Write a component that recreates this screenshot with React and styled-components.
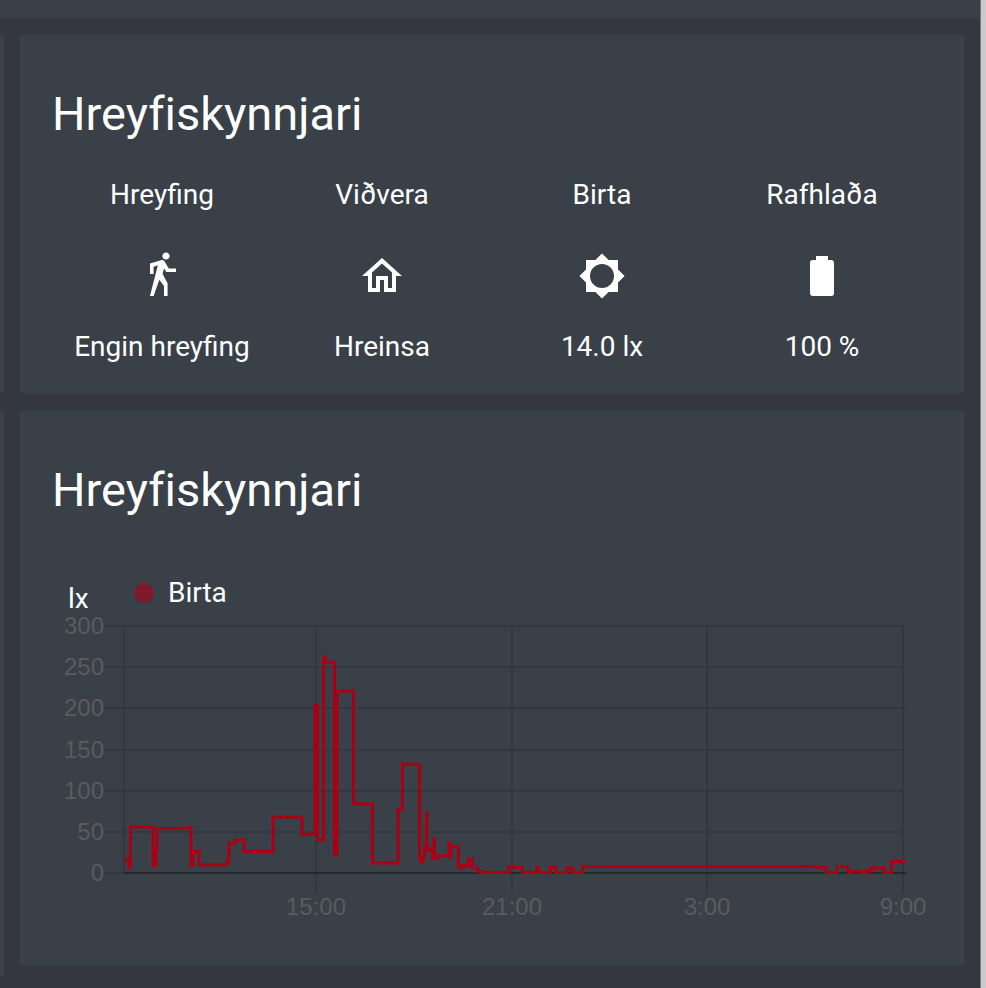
import React from 'react';
import styled, { createGlobalStyle } from 'styled-components';

const icons = {
	walk: 'M14.12,10H19V8.2H15.38L13.38,4.87C13.08,4.37 12.54,4.03 11.92,4.03C11.74,4.03 11.58,4.06 11.42,4.11L6,5.8V11H7.8V7.33L9.91,6.67L6,22H7.8L10.67,13.89L13,17V22H14.8V15.59L12.31,11.05L13.04,8.18M14,3.8C15,3.8 15.8,3 15.8,2C15.8,1 15,0.2 14,0.2C13,0.2 12.2,1 12.2,2C12.2,3 13,3.8 14,3.8Z',
	home: 'M12 5.69L17 10.19V18H15V12H9V18H7V10.19L12 5.69M12 3L2 12H5V20H11V14H13V20H19V12H22',
	brightness: 'M12,18A6,6 0 0,1 6,12A6,6 0 0,1 12,6A6,6 0 0,1 18,12A6,6 0 0,1 12,18M20,15.31L23.31,12L20,8.69V4H15.31L12,0.69L8.69,4H4V8.69L0.69,12L4,15.31V20H8.69L12,23.31L15.31,20H20V15.31Z',
	battery: 'M16.67,4H15V2H9V4H7.33A1.33,1.33 0 0,0 6,5.33V20.67C6,21.4 6.6,22 7.33,22H16.67A1.33,1.33 0 0,0 18,20.67V5.33C18,4.6 17.4,4 16.67,4Z'
};

const entities = [
	{ name: 'Hreyfing', icon: 'walk', state: 'Engin hreyfing' },
	{ name: 'Viðvera', icon: 'home', state: 'Hreinsa' },
	{ name: 'Birta', icon: 'brightness', state: '14.0 lx' },
	{ name: 'Rafhlaða', icon: 'battery', state: '100 %' }
];

// [offset from the left of the plot, lx]
const readings = [
	[0, 16], [5, 7], [6.5, 56], [29, 9], [32, 30], [33, 54], [59, 55],
	[67, 9], [69, 26], [75, 10], [103, 14], [105, 36], [111, 40],
	[120, 26], [149, 68], [178, 47], [191, 203], [193.5, 40], [199.5, 262],
	[201, 256], [210.5, 22], [213, 221], [229.5, 84], [248.5, 12],
	[274, 77], [278.5, 133], [280, 132], [295.5, 17], [297.5, 13],
	[299, 19], [300.5, 32], [302.5, 73], [303, 28], [305, 30],
	[308.5, 18], [310, 42], [310.5, 18], [314, 21], [325, 36],
	[326.5, 19], [327, 32], [334.5, 7], [338.5, 9], [344.5, 17],
	[348.5, 6], [353.5, 2], [357, 0.5], [384.5, 7], [398.5, 0.5],
	[413, 7], [414.5, 0.5], [426.5, 7], [431.5, 0.5], [443.5, 6],
	[448.5, 0.5], [458.5, 8], [692.5, 7], [702, 0.5], [713, 8],
	[724, 0.5], [728, 2], [736, 0.5], [739, 2], [742, 0.5], [745.5, 4],
	[748.5, 6.5], [760, 0.5], [767.5, 14], [782, 14]
];

const levels = [300, 250, 200, 150, 100, 50, 0];

const hours = [
	{ x: 264, label: '15:00' },
	{ x: 460, label: '21:00' },
	{ x: 655, label: '3:00' },
	{ x: 851, label: '9:00' }
];

const plot = { left: 72, right: 854, top: 14, bottom: 261 };

const toY = (lx) => plot.bottom - (lx / 300) * (plot.bottom - plot.top);

const stepPath = readings
	.map(([x, lx], i) => (i === 0 ? `M${plot.left + x} ${toY(lx)}` : `H${plot.left + x}V${toY(lx)}`))
	.join('');

const Icon = ({ name }) => (
	<IconSvg viewBox="0 0 24 24" aria-hidden="true">
		<path d={icons[name]} />
	</IconSvg>
);

const GlanceCard = () => (
	<Card>
		<Title>Hreyfiskynnjari</Title>
		<Glance>
			{entities.map((entity) => (
				<Entity key={entity.name} type="button">
					<span>{entity.name}</span>
					<Icon name={entity.icon} />
					<span>{entity.state}</span>
				</Entity>
			))}
		</Glance>
	</Card>
);

const HistoryChart = () => (
	<ChartSvg viewBox="0 0 880 322" role="img" aria-label="Birta (lx)">
		{levels.map((lx) => {
			const y = Math.round(toY(lx));
			return (
				<g key={lx}>
					<GridLine x1="52" x2={plot.right} y1={y} y2={y} />
					<AxisText x="52" y={y + 8} textAnchor="end">{lx}</AxisText>
				</g>
			);
		})}
		<GridLine x1={plot.left} x2={plot.left} y1={plot.top} y2={plot.bottom} />
		{hours.map((hour) => (
			<g key={hour.label}>
				<GridLine x1={hour.x} x2={hour.x} y1={plot.top} y2="281" />
				<AxisText x={hour.x} y="303" textAnchor="middle">{hour.label}</AxisText>
			</g>
		))}
		<GridLine $zero x1={plot.left} x2={plot.right} y1={plot.bottom} y2={plot.bottom} />
		<Series d={stepPath} />
	</ChartSvg>
);

const HistoryCard = () => (
	<Card>
		<Title>Hreyfiskynnjari</Title>
		<ChartHead>
			<Unit>lx</Unit>
			<Legend>
				<Dot />
				Birta
			</Legend>
		</ChartHead>
		<HistoryChart />
	</Card>
);

const App = () => (
	<Page>
		<GlobalStyle />
		<Dashboard>
			<Toolbar />
			<View>
				<SideColumn>
					<SideCard $height={360} />
					<SideCard $height={568} />
				</SideColumn>
				<Column>
					<GlanceCard />
					<HistoryCard />
				</Column>
			</View>
		</Dashboard>
		<WindowEdge />
	</Page>
);

export default App;

//Styles
const GlobalStyle = createGlobalStyle`
	*, *::before, *::after {
		box-sizing: border-box;
	}

	body {
		margin: 0;
		background: #343740;
		color: #fff;
		font-family: Roboto, "Liberation Sans", sans-serif;
	}
`;

const Page = styled.div`
	display: flex;
	min-height: 100vh;
`;

const Dashboard = styled.main`
	flex: 1;
	min-width: 0;
`;

const Toolbar = styled.header`
	height: 18px;
	background: #3a4048;
`;

const View = styled.div`
	display: flex;
	gap: 16px;
	padding: 16px 16px 0 0;
`;

const SideColumn = styled.div`
	display: flex;
	flex-direction: column;
	gap: 16px;
	width: 4px;
`;

const SideCard = styled.div`
	height: ${(props) => props.$height}px;
	background: #3a4048;
	border-radius: 0 4px 4px 0;
`;

const Column = styled.div`
	display: flex;
	flex: 1;
	flex-direction: column;
	gap: 16px;
	min-width: 0;
`;

const Card = styled.section`
	padding: 48px 32px 32px;
	background: #3a4048;
	border-radius: 5px;
`;

const Title = styled.h2`
	margin: 0;
	font-size: 47px;
	font-weight: 400;
	line-height: 64px;
	font-variant-ligatures: none;
`;

const Glance = styled.div`
	display: grid;
	grid-template-columns: repeat(4, 1fr);
	margin-top: 34px;
`;

const Entity = styled.button`
	display: flex;
	flex-direction: column;
	align-items: center;
	padding: 0;
	border: 0;
	background: none;
	color: inherit;
	font-family: inherit;
	font-size: 28px;
	line-height: 30px;
	white-space: nowrap;
	cursor: pointer;
`;

const IconSvg = styled.svg`
	width: 48px;
	height: 48px;
	margin: 42px 0 32px;
	fill: #fff;
`;

const ChartHead = styled.div`
	display: flex;
	align-items: flex-start;
	margin-top: 50px;
	height: 40px;
	padding-left: 16px;
	font-size: 28px;
	line-height: 42px;
`;

const Unit = styled.span`
	width: 66px;
	padding-top: 6px;
`;

const Legend = styled.span`
	display: flex;
	align-items: center;
	gap: 14px;
`;

const Dot = styled.span`
	width: 20px;
	height: 20px;
	border-radius: 50%;
	background: #7b1b2a;
`;

const ChartSvg = styled.svg`
	display: block;
	width: 100%;
	height: auto;
`;

const GridLine = styled.line`
	stroke: ${(props) => (props.$zero ? '#26282f' : '#34373f')};
	stroke-width: 2;
`;

const AxisText = styled.text`
	fill: #5b5b5c;
	font-family: "Liberation Sans", Arial, sans-serif;
	font-size: 24px;
`;

const Series = styled.path`
	fill: none;
	stroke: #a90016;
	stroke-width: 3;
`;

const WindowEdge = styled.div`
	width: 6px;
	border-left: 1px solid #77787b;
	background: #cbcac8;
`;
